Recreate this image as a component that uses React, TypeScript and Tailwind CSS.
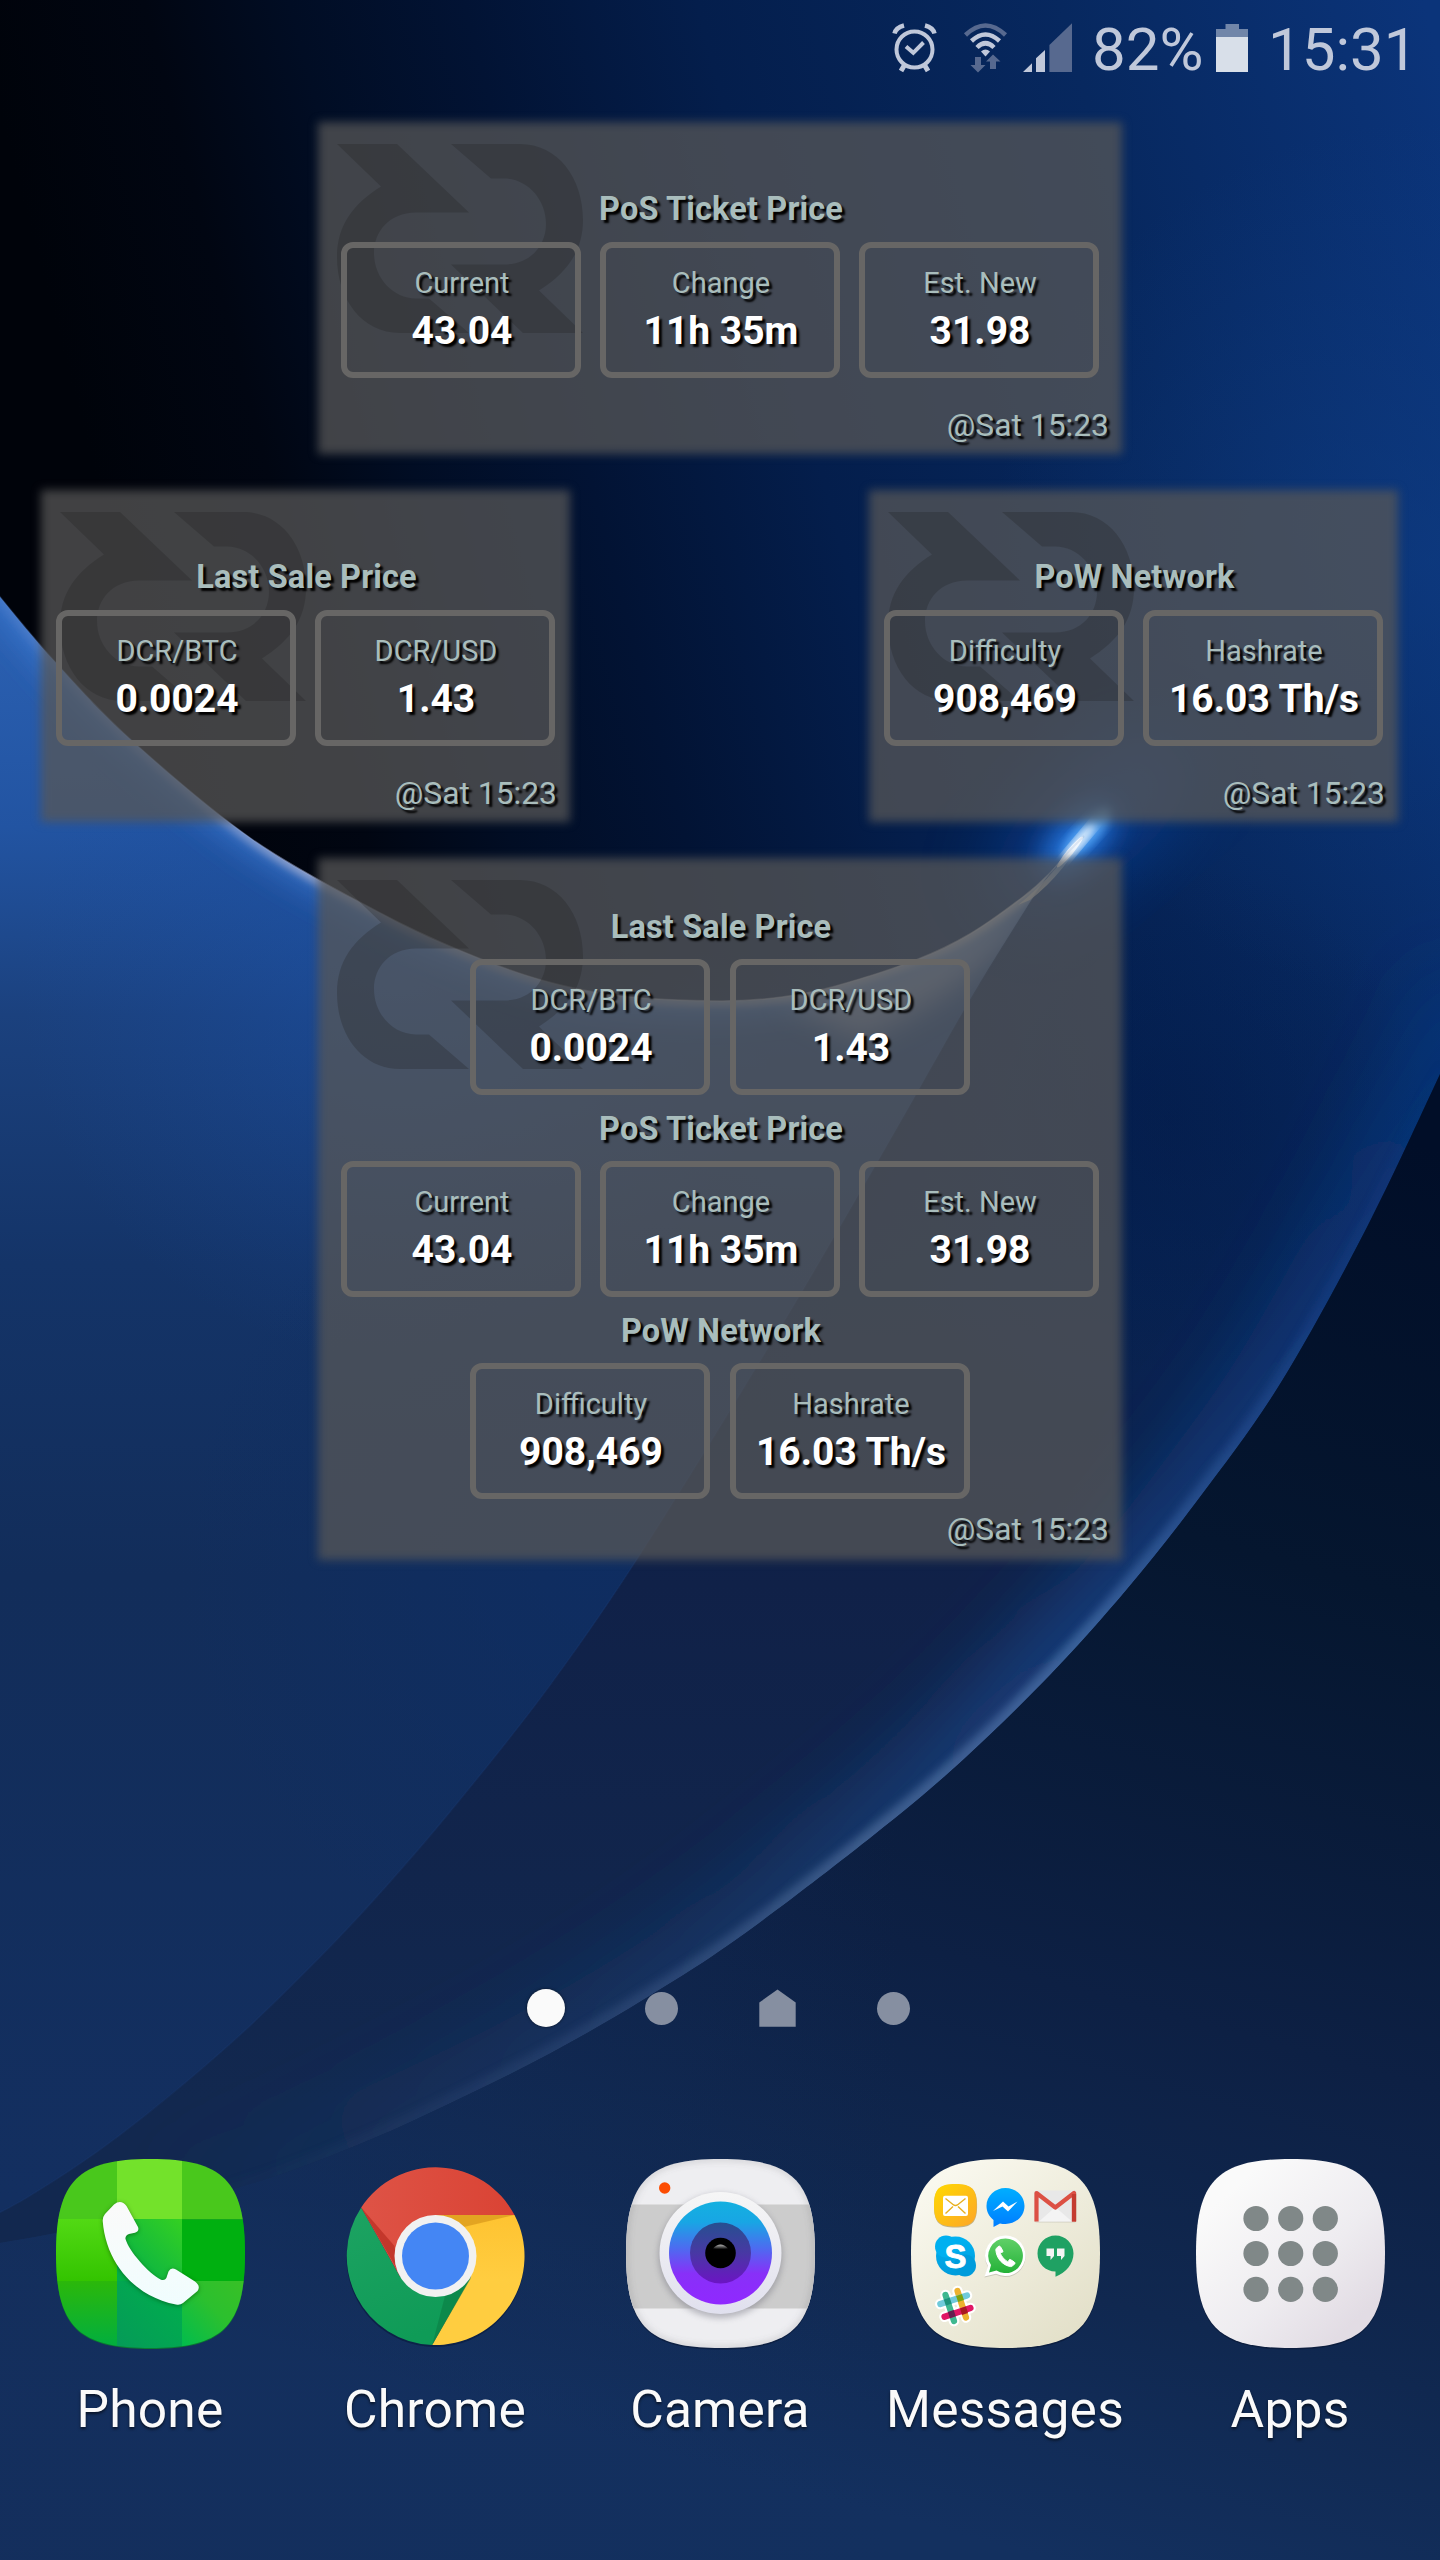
import React from "react";

type Pt = [number, number];

/* Catmull-Rom spline through the points, as cubic segments. */
function spline(pts: Pt[], move = true): string {
  let d = move ? `M${pts[0][0]} ${pts[0][1]}` : `L${pts[0][0]} ${pts[0][1]}`;
  for (let i = 0; i < pts.length - 1; i++) {
    const p0 = pts[i - 1] ?? pts[i];
    const p1 = pts[i];
    const p2 = pts[i + 1];
    const p3 = pts[i + 2] ?? p2;
    d += ` C${p1[0] + (p2[0] - p0[0]) / 6} ${p1[1] + (p2[1] - p0[1]) / 6} ${p2[0] - (p3[0] - p1[0]) / 6} ${p2[1] - (p3[1] - p1[1]) / 6} ${p2[0]} ${p2[1]}`;
  }
  return d;
}

const rim: Pt[] = [
  [-40, 545], [0, 597], [56, 663], [131, 740], [253, 840], [380, 913], [461, 951], [541, 980],
  [621, 996], [720, 1001], [782, 997], [836, 986], [916, 960], [970, 934], [1023, 897], [1050, 873], [1084, 836],
];
const fold: Pt[] = [
  [1084, 836], [1050, 873], [1010, 934], [964, 1010], [889, 1142], [782, 1325], [643, 1550], [551, 1684], [459, 1801],
  [390, 1882], [321, 1956], [230, 2044], [120, 2135], [28, 2197], [-40, 2232],
];
const edge: Pt[] = [
  [1480, 985], [1440, 1074], [1365, 1231], [1280, 1384], [1200, 1497], [1128, 1588], [1052, 1673], [963, 1760],
  [874, 1835], [740, 1937], [643, 2000], [551, 2053], [459, 2099], [367, 2141], [257, 2182], [100, 2224], [-40, 2250],
];

const rimPath = spline(rim);
const foldPath = spline(fold);
const edgePath = spline(edge);
const leftBody = `${rimPath} ${spline(fold, false)} Z`;
const aboveEdge = `${edgePath} L-40 -40 L1480 -40 Z`;
const belowEdge = `${edgePath} L-40 2600 L1480 2600 Z`;

function Wallpaper() {
  return (
    <svg className="absolute inset-0 h-full w-full" viewBox="0 0 1440 2560" preserveAspectRatio="none">
      <defs>
        <linearGradient id="sky" gradientUnits="userSpaceOnUse" x1="80" y1="420" x2="1440" y2="60">
          <stop offset="0" stopColor="#00030a" />
          <stop offset="0.12" stopColor="#010612" />
          <stop offset="0.22" stopColor="#010d24" />
          <stop offset="0.34" stopColor="#021334" />
          <stop offset="0.5" stopColor="#041e4c" />
          <stop offset="0.75" stopColor="#07285f" />
          <stop offset="1" stopColor="#0b347a" />
        </linearGradient>
        <linearGradient id="lower" gradientUnits="userSpaceOnUse" x1="0" y1="950" x2="0" y2="2100">
          <stop offset="0" stopColor="#05245a" stopOpacity="0" />
          <stop offset="0.3" stopColor="#082352" stopOpacity="0.8" />
          <stop offset="0.55" stopColor="#102148" />
          <stop offset="1" stopColor="#12284f" />
        </linearGradient>
        <radialGradient id="haze" gradientUnits="userSpaceOnUse" cx="1430" cy="560" r="440">
          <stop offset="0" stopColor="#0f3f88" stopOpacity="0.55" />
          <stop offset="1" stopColor="#0f3f88" stopOpacity="0" />
        </radialGradient>
        <radialGradient id="shade" gradientUnits="userSpaceOnUse" cx="1170" cy="1120" r="260">
          <stop offset="0" stopColor="#021640" stopOpacity="0.35" />
          <stop offset="1" stopColor="#021640" stopOpacity="0" />
        </radialGradient>
        <linearGradient id="body" gradientUnits="userSpaceOnUse" x1="0" y1="640" x2="0" y2="2200">
          <stop offset="0" stopColor="#2a5fb0" />
          <stop offset="0.12" stopColor="#2254a2" />
          <stop offset="0.24" stopColor="#1b417e" />
          <stop offset="0.4" stopColor="#143468" />
          <stop offset="0.6" stopColor="#122d5a" />
          <stop offset="1" stopColor="#132f60" />
        </linearGradient>
        <radialGradient id="bodyGlow" gradientUnits="userSpaceOnUse" cx="400" cy="980" r="380">
          <stop offset="0" stopColor="#1c58b8" stopOpacity="0.4" />
          <stop offset="1" stopColor="#1a50a8" stopOpacity="0" />
        </radialGradient>
        <radialGradient id="bodyDeep" gradientUnits="userSpaceOnUse" cx="600" cy="1560" r="420">
          <stop offset="0" stopColor="#0d2d64" stopOpacity="0.7" />
          <stop offset="1" stopColor="#0d2d64" stopOpacity="0" />
        </radialGradient>
        <linearGradient id="floor" gradientUnits="userSpaceOnUse" x1="1440" y1="1150" x2="1050" y2="2560">
          <stop offset="0" stopColor="#010e28" />
          <stop offset="0.3" stopColor="#05162f" />
          <stop offset="0.62" stopColor="#0d2044" />
          <stop offset="0.82" stopColor="#102850" />
          <stop offset="1" stopColor="#13305f" />
        </linearGradient>
        <linearGradient id="floorLeft" gradientUnits="userSpaceOnUse" x1="0" y1="0" x2="900" y2="0">
          <stop offset="0" stopColor="#142e5c" stopOpacity="0.7" />
          <stop offset="1" stopColor="#142e5c" stopOpacity="0" />
        </linearGradient>
        <linearGradient id="rimInk" gradientUnits="userSpaceOnUse" x1="0" y1="0" x2="1100" y2="0">
          <stop offset="0" stopColor="#5b86cf" stopOpacity="0.5" />
          <stop offset="0.28" stopColor="#a3aed2" stopOpacity="0.95" />
          <stop offset="0.5" stopColor="#8a8f9e" stopOpacity="0.8" />
          <stop offset="0.85" stopColor="#b4b4bc" stopOpacity="0.9" />
          <stop offset="1" stopColor="#f4f0e8" />
        </linearGradient>
        <linearGradient id="edgeInk" gradientUnits="userSpaceOnUse" x1="1440" y1="1050" x2="150" y2="2220">
          <stop offset="0" stopColor="#1a52a8" stopOpacity="0" />
          <stop offset="0.15" stopColor="#2458a8" stopOpacity="0.35" />
          <stop offset="0.38" stopColor="#5d86be" stopOpacity="0.75" />
          <stop offset="0.55" stopColor="#6f8cb8" stopOpacity="0.65" />
          <stop offset="0.75" stopColor="#4f6a98" stopOpacity="0.35" />
          <stop offset="1" stopColor="#33507f" stopOpacity="0" />
        </linearGradient>
        <linearGradient id="edgeWide" gradientUnits="userSpaceOnUse" x1="1440" y1="1050" x2="150" y2="2220">
          <stop offset="0" stopColor="#0f48a0" stopOpacity="0.3" />
          <stop offset="0.4" stopColor="#1a4f9c" stopOpacity="0.6" />
          <stop offset="0.7" stopColor="#204a84" stopOpacity="0.35" />
          <stop offset="1" stopColor="#23508c" stopOpacity="0" />
        </linearGradient>
        <clipPath id="clipBody"><path d={leftBody} /></clipPath>
        <clipPath id="clipAbove"><path d={aboveEdge} /></clipPath>
        <filter id="b3" x="-20%" y="-20%" width="140%" height="140%"><feGaussianBlur stdDeviation="4" /></filter>
        <filter id="b14" x="-50%" y="-50%" width="200%" height="200%"><feGaussianBlur stdDeviation="14" /></filter>
        <filter id="b40" x="-50%" y="-50%" width="200%" height="200%"><feGaussianBlur stdDeviation="36" /></filter>
      </defs>

      <rect width="1440" height="2560" fill="url(#sky)" />
      <rect width="1440" height="1200" fill="url(#haze)" />
      <rect y="950" width="1440" height="1300" fill="url(#lower)" />
      <rect y="800" x="800" width="640" height="700" fill="url(#shade)" />

      <g clipPath="url(#clipAbove)">
        <path d={edgePath} fill="none" stroke="url(#edgeWide)" strokeWidth="100" filter="url(#b40)" />
      </g>

      <ellipse cx="1092" cy="822" rx="120" ry="55" fill="#0c56c8" opacity="0.4" filter="url(#b40)" transform="rotate(-40 1092 822)" />
      <path d={leftBody} fill="url(#body)" />
      <g clipPath="url(#clipBody)">
        <path d={leftBody} fill="url(#bodyGlow)" />
        <path d={leftBody} fill="url(#bodyDeep)" />
        <path d={rimPath} fill="none" stroke="#3f86e0" strokeOpacity="0.5" strokeWidth="30" filter="url(#b14)" />
        <path d={rimPath} fill="none" stroke="url(#rimInk)" strokeWidth="9" filter="url(#b3)" />
        <path d="M780 1000 Q960 970 1060 860 L1010 934 Q960 1000 860 1040 Z" fill="#b8bcc8" opacity="0.5" filter="url(#b14)" />
      </g>
      <path d={rimPath} fill="none" stroke="url(#rimInk)" strokeWidth="1.5" opacity="0.6" />
      <path d="M1018 905 Q1050 880 1088 828 Q1066 872 1030 900 Z" fill="#d8d4cc" opacity="0.8" />

      <ellipse cx="1078" cy="840" rx="46" ry="22" fill="#2b82f0" opacity="0.85" filter="url(#b14)" transform="rotate(-45 1078 840)" />
      <ellipse cx="1086" cy="834" rx="34" ry="11" fill="#5aaaf8" opacity="0.8" filter="url(#b3)" transform="rotate(-47 1086 834)" />
      <ellipse cx="1079" cy="842" rx="24" ry="5" fill="#f2f7fb" filter="url(#b3)" transform="rotate(-50 1079 842)" />
      <ellipse cx="1070" cy="852" rx="20" ry="3" fill="#ffffff" opacity="0.75" transform="rotate(-50 1070 852)" />

      <g clipPath="url(#clipAbove)">
        <path d={edgePath} fill="none" stroke="url(#edgeInk)" strokeWidth="18" filter="url(#b3)" opacity="0.7" />
      </g>
      <path d={belowEdge} fill="url(#floor)" />
      <path d={belowEdge} fill="url(#floorLeft)" />
      <path d={foldPath} fill="none" stroke="#2a5294" strokeOpacity="0.1" strokeWidth="2" />
    </svg>
  );
}

function Mark() {
  const d =
    "M0 0 L60 0 L132 68.500 L79 68.500 C52 68.500 37 88 37 109 C37 134 56 154.400 79 154.400 L92 154.400 L132 189 L63 189 C25 189 0 155 0 113 C0 82 16 60 44 42.600 Z";
  return (
    <svg className="absolute left-[19px] top-[22px] h-[189px] w-[246px]" viewBox="0 0 246 189">
      <g fill="#1e1e1e" opacity="0.25">
        <path d={d} />
        <path d={d} transform="rotate(180 123 94.500)" />
      </g>
    </svg>
  );
}

function Panel({ className, children }: { className: string; children: React.ReactNode }) {
  return (
    <div className={`relative flex flex-col items-center ${className}`}>
      <div className="absolute inset-0 bg-[#575757]/75 blur-[5px]" />
      <Mark />
      <div className="relative flex w-full flex-1 flex-col items-center">{children}</div>
    </div>
  );
}

const inkShadow = "[text-shadow:3px_3px_2px_#000]";

function Title({ children }: { children: string }) {
  return <h2 className={`h-10 pl-[2px] text-[32.500px] leading-[40px] font-bold tracking-[0.15px] text-[#a9bdbc] ${inkShadow}`}>{children}</h2>;
}

function Stats({ items, gap }: { items: [string, string][]; gap: string }) {
  return (
    <div className={`flex ${gap}`}>
      {items.map(([label, value]) => (
        <div key={label} className="flex h-[136px] w-[240px] flex-col items-center rounded-[12px] border-[6px] border-[#676665] pt-[17px] pl-[2px] whitespace-nowrap">
          <span className={`text-[29px] leading-[36px] text-[#a9bdbc] ${inkShadow}`}>{label}</span>
          <span className={`mt-2 text-[39px] leading-[44px] font-bold text-white ${inkShadow}`}>{value}</span>
        </div>
      ))}
    </div>
  );
}

function Stamp({ className }: { className: string }) {
  return <div className={`self-end text-[31.800px] leading-[40px] text-[#a9bdbc] ${inkShadow} ${className}`}>@Sat 15:23</div>;
}

const sale: [string, string][] = [["DCR/BTC", "0.0024"], ["DCR/USD", "1.43"]];
const ticket: [string, string][] = [["Current", "43.04"], ["Change", "11h 35m"], ["Est. New", "31.98"]];
const network: [string, string][] = [["Difficulty", "908,469"], ["Hashrate", "16.03 Th/s"]];

function SmallPanel({ className, title, items, gap }: { className: string; title: string; items: [string, string][]; gap: string }) {
  return (
    <Panel className={`h-[332px] pt-[67px] ${className}`}>
      <Title>{title}</Title>
      <div className="h-[13px]" />
      <Stats items={items} gap={gap} />
      <Stamp className="mt-[27px] mr-[13px]" />
    </Panel>
  );
}

function StatusBar() {
  return (
    <div className="flex h-[100px] pl-[892px] text-[60px] leading-[100px] text-[#c0c8da]">
      <svg className="mt-[22px] h-[52px] w-[46px] shrink-0" viewBox="892 22 46 52" fill="none" stroke="#c0c8da">
        <circle cx="914.500" cy="49.500" r="18" strokeWidth="4" />
        <path d="M906 46.500 L913.300 52.800 L923.500 42.500" strokeWidth="4" />
        <path d="M894.500 33.500 Q896 27.500 904 25.500 M934.500 33.500 Q933 27.500 925 25.500" strokeWidth="4.500" />
        <path d="M904.500 65 L901 71 M924.500 65 L928 71" strokeWidth="5" />
      </svg>
      <svg className="mt-[22px] ml-[25px] h-[52px] w-[46px] shrink-0" viewBox="963 22 46 52" fill="none" stroke="#c0c8da" strokeWidth="4.500">
        <path d="M965.500 35 Q985.500 16 1005.500 35" stroke="#57698f" />
        <path d="M971.500 41 Q985.500 28 999.500 41" />
        <path d="M977 47.500 Q985.500 39 994 47.500" />
        <path d="M981 51.500 Q985.500 47.500 990 51.500 L985.500 56.500 Z" fill="#c0c8da" stroke="none" />
        <path d="M975 57 h6 v8 h4.500 L978 72.500 L970.500 65 h4.500 Z M990 69 h6 v-7.500 h4.500 L993 54.500 L986 61.500 h4 Z" fill="#57698f" stroke="none" />
      </svg>
      <svg className="mt-[22px] ml-[13px] h-[52px] w-[52px] shrink-0" viewBox="1022 22 52 52">
        <path d="M1023 72 L1032 63.300 V72 Z M1036 72 V58.300 L1045 50 V72 Z" fill="#c0c8da" />
        <path d="M1049.400 72 V45 L1072 23.300 V72 Z" fill="#57698f" />
      </svg>
      <span className="ml-[18px] w-[124px] shrink-0 whitespace-nowrap">82%</span>
      <svg className="mt-[22px] h-[52px] w-[32px] shrink-0" viewBox="1216 22 32 52">
        <path d="M1216 37 V29 H1225.500 V24 H1239 V29 H1248 V37 Z" fill="#7186a9" />
        <rect x="1216" y="37" width="32" height="35" fill="#d8dfe9" />
      </svg>
      <span className="ml-[20px] shrink-0 whitespace-nowrap">15:31</span>
    </div>
  );
}

function Pager() {
  return (
    <div className="flex h-10 items-center">
      <div className="ml-[527px] h-[38px] w-[38px] rounded-full bg-[#fafafa] shadow-[0_0_3px_rgba(0,0,0,0.6)]" />
      <div className="ml-[80px] h-[33px] w-[33px] rounded-full bg-[#868fa1]" />
      <svg className="ml-[81px] h-[38px] w-[37px]" viewBox="0 0 37 38">
        <path d="M18.500 0.500 L36.700 13.500 V37.800 H0.300 V13.500 Z" fill="#868fa1" />
      </svg>
      <div className="ml-[81px] h-[33px] w-[33px] rounded-full bg-[#868fa1]" />
    </div>
  );
}

const squircle =
  "M94.500 0 C167 0 189 22 189 94.500 C189 167 167 189 94.500 189 C22 189 0 167 0 94.500 C0 22 22 0 94.500 0 Z";

function PhoneIcon() {
  return (
    <svg className="h-[189px] w-[189px] overflow-visible" viewBox="0 0 189 189">
      <defs>
        <clipPath id="phTile"><path d={squircle} /></clipPath>
        <linearGradient id="phA" x1="0" y1="0" x2="0" y2="1"><stop stopColor="#52d914" /><stop offset="1" stopColor="#33c400" /></linearGradient>
        <linearGradient id="phB" x1="1" y1="0" x2="0" y2="1"><stop stopColor="#34d022" /><stop offset="1" stopColor="#00ac4c" /></linearGradient>
        <linearGradient id="phC" x1="0" y1="0" x2="0" y2="1"><stop stopColor="#2bb80a" /><stop offset="1" stopColor="#00ae40" /></linearGradient>
        <linearGradient id="phD" x1="1" y1="0" x2="0" y2="1"><stop stopColor="#00b04c" /><stop offset="1" stopColor="#059a58" /></linearGradient>
        <linearGradient id="phE" x1="1" y1="0" x2="0" y2="1"><stop stopColor="#38c026" /><stop offset="0.450" stopColor="#2cc02e" /><stop offset="1" stopColor="#00bc4e" /></linearGradient>
        <linearGradient id="phH" x1="0" y1="0" x2="0" y2="1"><stop stopColor="#fbfafa" /><stop offset="1" stopColor="#f0fdfe" /></linearGradient>
      </defs>
      <path d={squircle} fill="#0a7a30" transform="translate(0 1)" />
      <g clipPath="url(#phTile)">
        <rect width="61" height="60.500" fill="#49c81c" />
        <rect x="61" width="65" height="60.500" fill="#73e22b" />
        <rect x="126" width="63" height="60.500" fill="#49c81c" />
        <rect y="60" width="61" height="62" fill="url(#phA)" />
        <rect x="61" y="60" width="65" height="62" fill="url(#phB)" />
        <rect x="126" y="60.500" width="63" height="61.500" fill="#00b010" />
        <rect y="122" width="61" height="67" fill="url(#phC)" />
        <rect x="61" y="122" width="65" height="67" fill="url(#phD)" />
        <rect x="126" y="122" width="63" height="67" fill="url(#phE)" />
      </g>
      <path
        className="drop-shadow-[0_1px_2px_rgba(0,60,0,0.5)]"
        d="M58 45.500 Q65 40 70.500 47 L82 68 Q83.500 72.500 79 73.700 L73 75 Q69 76.500 69.500 80 C73 92 92 114 105 120.700 Q110 122 111 117 L112.500 112.500 Q115 107.500 120 110.500 L139 122.500 Q145 127 141.500 132 L127 144 Q124 146.500 120 145.500 C80 138 50 105 46.700 62 Q46.500 58 49 55 Z"
        fill="url(#phH)"
      />
    </svg>
  );
}

function ChromeIcon() {
  return (
    <svg className="h-[189px] w-[189px] overflow-visible" viewBox="-94.500 -97 189 189">
      <defs>
        <linearGradient id="crR" x1="0" y1="0.500" x2="1" y2="0.500"><stop stopColor="#de5346" /><stop offset="1" stopColor="#da4334" /></linearGradient>
        <linearGradient id="crG" x1="0" y1="0" x2="0.400" y2="1"><stop stopColor="#1da362" /><stop offset="1" stopColor="#0f9b57" /></linearGradient>
        <linearGradient id="crY" x1="0" y1="0" x2="0" y2="1"><stop stopColor="#fec331" /><stop offset="0.500" stopColor="#ffcd40" /><stop offset="1" stopColor="#ffcd40" /></linearGradient>
      </defs>
      <circle cy="2" r="89" fill="#051433" opacity="0.5" />
      <path d="M-3.300 89 A89 89 0 0 1 -74.300 -48.500 L-35.500 20.500 L35.500 20.500 Z" fill="url(#crG)" />
      <path d="M79 -41 A89 89 0 0 1 -3.300 89 L35.500 20.500 L0 -41 Z" fill="url(#crY)" />
      <path d="M-74.300 -48.500 A89 89 0 0 1 79 -41 L0 -41 L-35.500 20.500 Z" fill="url(#crR)" />
      <path d="M79 -41 L0 -41 L20 -27 Z" fill="#d99a1c" opacity="0.75" />
      <path d="M-74.300 -48.500 L-38 14 L-41 -10 Z" fill="#b3261c" opacity="0.6" />
      <path d="M-3.300 89 L35.500 22 L10 38 Z" fill="#0a7f45" opacity="0.65" />
      <circle r="41" fill="#f1f1f1" />
      <circle r="33.500" fill="#4486f4" />
    </svg>
  );
}

function CameraIcon() {
  return (
    <svg className="h-[189px] w-[189px] overflow-visible" viewBox="0 0 189 189">
      <defs>
        <clipPath id="caTile"><path d={squircle} /></clipPath>
        <linearGradient id="caRing" x1="0" y1="0" x2="0" y2="1"><stop stopColor="#f6f6f6" /><stop offset="1" stopColor="#e0e0ee" /></linearGradient>
        <linearGradient id="caLens" x1="0" y1="0" x2="0" y2="1">
          <stop stopColor="#14b0e0" /><stop offset="0.200" stopColor="#18a6e4" /><stop offset="0.450" stopColor="#4c6cf0" />
          <stop offset="0.700" stopColor="#8830f8" /><stop offset="1" stopColor="#9028ff" />
        </linearGradient>
        <linearGradient id="caIris" x1="0" y1="0" x2="0" y2="1"><stop stopColor="#265090" /><stop offset="0.500" stopColor="#4838a4" /><stop offset="1" stopColor="#6c14c4" /></linearGradient>
        <linearGradient id="caGlint" x1="0" y1="0" x2="0" y2="1"><stop stopColor="#b8b8b8" /><stop offset="1" stopColor="#000" /></linearGradient>
        <filter id="caBlur" x="-20%" y="-20%" width="140%" height="140%"><feGaussianBlur stdDeviation="3" /></filter>
      </defs>
      <path d={squircle} fill="#07142e" opacity="0.5" transform="translate(0 1.500)" />
      <g clipPath="url(#caTile)">
        <rect width="189" height="189" fill="#eeeef1" />
        <rect y="45.500" width="189" height="104" fill="#cccccc" />
        <path d={squircle} fill="none" stroke="#6b6b70" strokeOpacity="0.35" strokeWidth="3" filter="url(#caBlur)" />
      </g>
      <circle cx="94.500" cy="97" r="62" fill="#70707c" opacity="0.45" filter="url(#caBlur)" />
      <circle cx="94.500" cy="94" r="61" fill="url(#caRing)" />
      <circle cx="94.500" cy="94" r="51.500" fill="url(#caLens)" />
      <circle cx="94.500" cy="94" r="30.500" fill="url(#caIris)" />
      <circle cx="94.500" cy="94" r="15.300" fill="#000" />
      <path d="M87 89.500 Q94.500 81.500 102 89.500 Q94.500 91 87 89.500 Z" fill="url(#caGlint)" />
      <circle cx="38.700" cy="29" r="5.700" fill="#fc4c02" />
    </svg>
  );
}

function MessagesIcon() {
  return (
    <svg className="h-[189px] w-[189px] overflow-visible" viewBox="0 0 189 189">
      <defs>
        <linearGradient id="msT" x1="0.150" y1="0.100" x2="0.850" y2="0.950"><stop stopColor="#f9f8ee" /><stop offset="1" stopColor="#e3e0c9" /></linearGradient>
        <linearGradient id="msM" x1="0" y1="0" x2="1" y2="1"><stop stopColor="#ffd900" /><stop offset="1" stopColor="#fda629" /></linearGradient>
        <linearGradient id="msF" x1="0" y1="0" x2="0" y2="1"><stop stopColor="#00aeff" /><stop offset="1" stopColor="#007dff" /></linearGradient>
        <linearGradient id="msS" x1="0" y1="0" x2="0" y2="1"><stop stopColor="#00b2f2" /><stop offset="1" stopColor="#009cdc" /></linearGradient>
        <linearGradient id="msW" x1="0" y1="0" x2="0" y2="1"><stop stopColor="#60d068" /><stop offset="1" stopColor="#24b238" /></linearGradient>
      </defs>
      <path d={squircle} fill="#07142e" opacity="0.5" transform="translate(0 1.500)" />
      <path d={squircle} fill="url(#msT)" />

      <path d={squircle} transform="translate(23 25.500) scale(0.228)" fill="#a08848" opacity="0.6" />
      <path d={squircle} transform="translate(23 25) scale(0.226)" fill="url(#msM)" />
      <rect x="32" y="36.700" width="25" height="20.300" rx="2" fill="#fff" />
      <path d="M34.500 39.500 L42 45.500 Q44.500 47.500 47 45.500 L54.500 39.500 M34.500 54.500 L42 47.500 M54.500 54.500 L47 47.500" fill="none" stroke="#e8b020" strokeWidth="1.400" />

      <path d="M94.500 29 C105 29 113.500 37 113.500 47 C113.500 57 105 65 94.500 65 Q91.500 65 89 64.500 L82.500 68 V61 C78 57.500 75.500 52.500 75.500 47 C75.500 37 84 29 94.500 29 Z" fill="url(#msF)" />
      <path d="M82 52 L92 42.500 L97.500 47.500 L106.500 42.500 L97 52.500 L91.500 47.500 Z" fill="#fff" />

      <rect x="123.500" y="32" width="42" height="31.500" rx="2" fill="#b9b4a8" opacity="0.5" />
      <rect x="123.500" y="31.500" width="41.500" height="31" rx="2" fill="#e8e8e8" />
      <path d="M128 62.500 L144.300 48 L161 62.500 Z" fill="#f4f4f4" />
      <path d="M125.500 62.500 V34 L144.300 48.500 L163 34 V62.500" fill="none" stroke="#dc5044" strokeWidth="4.200" strokeLinejoin="round" />
      <path d="M163 35 V62.500" stroke="#c43c30" strokeWidth="4.200" />

      <circle cx="44.500" cy="97" r="19.500" fill="url(#msS)" />
      <circle cx="35" cy="87.500" r="11" fill="#00b0f0" />
      <circle cx="54" cy="106.500" r="11" fill="#009cdc" />
      <text x="44.500" y="109" textAnchor="middle" fontSize="33" fontWeight="700" fill="#fff" stroke="#fff" strokeWidth="0.800" fontFamily="'Liberation Sans', Arial, sans-serif">S</text>

      <path d="M94.500 76.400 A20.300 20.300 0 1 1 85 114.800 L73.500 117.500 L77 107 A20.300 20.300 0 0 1 94.500 76.400 Z" fill="#a8a698" opacity="0.5" transform="translate(0 1)" />
      <path d="M94.500 76.400 A20.300 20.300 0 1 1 85 114.800 L73.500 117.500 L77 107 A20.300 20.300 0 0 1 94.500 76.400 Z" fill="#fff" />
      <path d="M94.500 79.500 A17.300 17.300 0 1 1 85.500 111.500 L78 113.500 L80 106 A17.300 17.300 0 0 1 94.500 79.500 Z" fill="url(#msW)" />
      <path d="M58 45.500 Q65 40 70.500 47 L82 68 Q83.500 72.500 79 73.700 L73 75 Q69 76.500 69.500 80 C73 92 92 114 105 120.700 Q110 122 111 117 L112.500 112.500 Q115 107.500 120 110.500 L139 122.500 Q145 127 141.500 132 L127 144 Q124 146.500 120 145.500 C80 138 50 105 46.700 62 Q46.500 58 49 55 Z" transform="translate(75.500 78.500) scale(0.200)" fill="#fff" stroke="#fff" strokeWidth="5" />

      <path d="M144.500 76.500 C154.500 76.500 162.500 84.500 162.500 94.500 C162.500 105 154.500 114 144.500 117.700 V112.500 C134.500 112.500 126.500 104.500 126.500 94.500 C126.500 84.500 134.500 76.500 144.500 76.500 Z" fill="#1fa163" />
      <path d="M135.500 89.500 h7.500 v7.500 l-3.500 4 v-4 h-4 Z M146 89.500 h7.500 v7.500 l-3.500 4 v-4 h-4 Z" fill="#f4f4f4" />

      <g fill="none" strokeLinecap="round">
        <g stroke="#fff" strokeWidth="10.500">
          <path d="M34.500 136 L43 162 M46.500 132 L55 158.500 M29.300 145 L56 136.500 M33.500 157.700 L59.500 149" />
        </g>
        <g strokeWidth="6.200">
          <path d="M34.500 136 L43 162" stroke="#3eb890" />
          <path d="M46.500 132 L55 158.500" stroke="#ecb12f" />
          <path d="M29.300 145 L56 136.500" stroke="#70cadb" />
          <path d="M33.500 157.700 L59.500 149" stroke="#e01765" />
        </g>
        <g strokeWidth="6.200" strokeLinecap="butt">
          <path d="M35.700 139.500 L37.800 145.800" stroke="#1c937c" />
          <path d="M48 136 L50 142" stroke="#7fa30d" />
          <path d="M39.800 152 L41.800 158.300" stroke="#65204f" />
          <path d="M52 148.500 L54 155" stroke="#a81a22" />
        </g>
      </g>
    </svg>
  );
}

function AppsIcon() {
  return (
    <svg className="h-[189px] w-[189px] overflow-visible" viewBox="0 0 189 189">
      <defs>
        <linearGradient id="apT" x1="0.200" y1="0.150" x2="0.850" y2="0.850">
          <stop stopColor="#fafafa" /><stop offset="0.600" stopColor="#eeecf0" /><stop offset="1" stopColor="#e2dce4" />
        </linearGradient>
      </defs>
      <path d={squircle} fill="#07142e" opacity="0.5" transform="translate(0 1.500)" />
      <path d={squircle} fill="url(#apT)" />
      {[59.5, 94.5, 130.3].map((y) => [60, 94.7, 129.3].map((x) => <circle key={`${x}-${y}`} cx={x} cy={y} r="12.600" fill="#808888" />))}
    </svg>
  );
}

const dock: [string, () => React.JSX.Element][] = [
  ["Phone", PhoneIcon],
  ["Chrome", ChromeIcon],
  ["Camera", CameraIcon],
  ["Messages", MessagesIcon],
  ["Apps", AppsIcon],
];

export default function App() {
  return (
    <div className="relative h-[2560px] w-[1440px] overflow-hidden bg-[#0d2044] font-['Roboto',sans-serif]">
      <Wallpaper />
      <div className="relative flex flex-col">
        <StatusBar />
        <SmallPanel className="mx-auto mt-[22px] w-[804px]" title="PoS Ticket Price" items={ticket} gap="gap-[19px]" />
        <div className="mt-9 flex justify-between pr-[42px] pl-[41px]">
          <SmallPanel className="w-[529px]" title="Last Sale Price" items={sale} gap="gap-[19px]" />
          <SmallPanel className="w-[529px]" title="PoW Network" items={network} gap="gap-[19px]" />
        </div>
        <Panel className="mx-auto mt-9 h-[702px] w-[804px] pt-[49px]">
          <Title>Last Sale Price</Title>
          <div className="h-3" />
          <Stats items={sale} gap="gap-[20px]" />
          <div className="h-3.5" />
          <Title>PoS Ticket Price</Title>
          <div className="h-3" />
          <Stats items={ticket} gap="gap-[19px]" />
          <div className="h-3.5" />
          <Title>PoW Network</Title>
          <div className="h-3" />
          <Stats items={network} gap="gap-[20px]" />
          <Stamp className="mt-[10px] mr-[13px]" />
        </Panel>
        <div className="mt-[428px]">
          <Pager />
        </div>
        <div className="mt-[131px] flex justify-center">
          {dock.map(([name, Icon]) => (
            <div key={name} className="flex w-[285px] flex-col items-center">
              <Icon />
              <span className="mt-8 text-[51.500px] leading-[60px] tracking-[0.200px] whitespace-nowrap text-[#fafafa] [text-shadow:0_2px_3px_rgba(0,0,0,0.6)]">{name}</span>
            </div>
          ))}
        </div>
      </div>
    </div>
  );
}
